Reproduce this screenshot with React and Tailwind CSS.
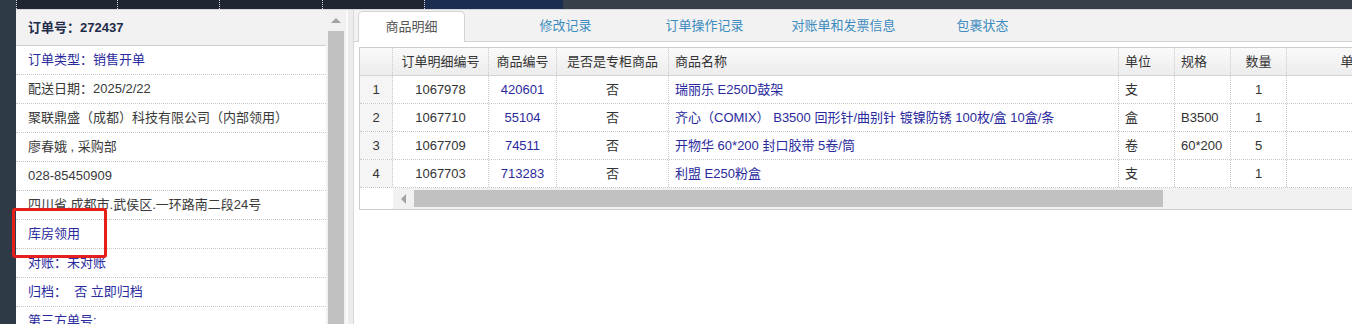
import React from "react";

const leftRows = [
  { t: "订单类型：销售开单", blue: true },
  { t: "配送日期：2025/2/22" },
  { t: "聚联鼎盛（成都）科技有限公司（内部领用）" },
  { t: "廖春娥 , 采购部" },
  { t: "028-85450909" },
  { t: "四川省.成都市.武侯区.一环路南二段24号" },
  { t: "库房领用", blue: true },
  { t: "对账：未对账", blue: true },
  { t: "归档：  否 立即归档", blue: true },
  { t: "第三方单号:", blue: true },
];

const rows = [
  ["1", "1067978", "420601", "否", "瑞丽乐 E250D鼓架", "支", "", "1"],
  ["2", "1067710", "55104", "否", "齐心（COMIX） B3500 回形针/曲别针 镀镍防锈 100枚/盒 10盒/条", "盒", "B3500", "1"],
  ["3", "1067709", "74511", "否", "开物华 60*200 封口胶带 5卷/筒", "卷", "60*200", "5"],
  ["4", "1067703", "713283", "否", "利盟 E250粉盒", "支", "", "1"],
];

const tabs = ["商品明细", "修改记录", "订单操作记录", "对账单和发票信息", "包裹状态"];

function Cell({ w, className = "", children }) {
  return (
    <div className={`${w} shrink-0 h-full flex items-center border-r border-dotted border-[#c8c8c8] ${className}`}>
      {children}
    </div>
  );
}

export default function App() {
  return (
    <div className="relative w-[1352px] h-[324px] overflow-hidden flex bg-white font-['Liberation_Sans','Noto_Sans_CJK_SC',sans-serif] text-[13px] text-[#333]">
      {/* far-left dark strip */}
      <div className="w-[16px] shrink-0 h-full bg-[#2e3a46]" />

      <div className="flex-1 flex flex-col min-w-0">
        {/* top bar */}
        <div className="h-[9px] shrink-0 flex bg-[#1f2531]">
          <div className="w-[101px] border-l border-dotted border-[#d8d8d8]" />
          <div className="w-[102px] border-l border-dotted border-[#d8d8d8]" />
          <div className="w-[103px] border-l border-dotted border-[#d8d8d8]" />
          <div className="w-[102px] border-l border-dotted border-[#d8d8d8]" />
          <div className="w-[139px] border-l border-dotted border-[#d8d8d8] bg-[#1b2d50]" />
          <div className="flex-1 bg-[#363f4a]" />
        </div>

        <div className="flex-1 flex min-h-0 border-t border-[#d6d6d6]">
          {/* left info panel */}
          <div className="w-[310px] shrink-0 flex flex-col">
            <div className="h-[36px] shrink-0 flex items-center pl-[12px] bg-[#f2f2f2] border-b border-[#cfcfcf] font-bold text-[#1f2b4a]">
              订单号：272437
            </div>
            {leftRows.map((r, i) => (
              <div
                key={i}
                className={`h-[29px] shrink-0 flex items-center pl-[12px] border-b border-dotted border-[#c8c8c8] whitespace-pre ${r.blue ? "text-[#2a2a9e]" : "text-[#3a3a3a]"}`}
              >
                {r.t}
              </div>
            ))}
          </div>

          {/* vertical scrollbar */}
          <div className="w-[20px] shrink-0 flex flex-col bg-[#f1f1f1]">
            <div className="h-[21px] shrink-0 flex items-center justify-center">
              <div className="w-0 h-0 border-l-[5px] border-r-[5px] border-b-[5px] border-l-transparent border-r-transparent border-b-[#a3a3a3]" />
            </div>
            <div className="flex-1 mx-[2px] bg-[#c1c1c1]" />
          </div>

          {/* gap */}
          <div className="w-[7px] shrink-0 bg-[#ececec] border-l-2 border-[#fafafa]" />

          {/* right panel */}
          <div className="flex-1 min-w-0 flex flex-col border-l border-[#d9d9d9]">
            <div className="h-[32px] shrink-0 flex items-end gap-[32px] bg-[#f2f2f2] border-b border-[#d3d3d3] pl-[4px]">
              {tabs.map((t, i) =>
                i === 0 ? (
                  <div
                    key={t}
                    className="w-[107px] shrink-0 h-[31px] -mb-px mr-[15px] flex items-center justify-center bg-white border border-b-0 border-[#d3d3d3] rounded-t-[5px] text-[#555]"
                  >
                    {t}
                  </div>
                ) : (
                  <div key={t} className="w-[107px] shrink-0 h-[31px] flex items-center justify-center whitespace-nowrap text-[#3d8cc0]">
                    {t}
                  </div>
                )
              )}
            </div>

            <div className="pt-[5px] pl-[5px]">
              <div className="w-[1100px] border border-[#cdcdcd]">
                {/* header */}
                <div className="h-[28px] flex border-b border-[#d5d5d5] bg-gradient-to-b from-[#fafafa] to-[#ececec]">
                  <Cell w="w-[33px]" />
                  <Cell w="w-[96px]" className="justify-center">订单明细编号</Cell>
                  <Cell w="w-[68px]" className="justify-center">商品编号</Cell>
                  <Cell w="w-[112px]" className="justify-center">是否是专柜商品</Cell>
                  <Cell w="w-[450px]" className="pl-[6px]">商品名称</Cell>
                  <Cell w="w-[56px]" className="pl-[6px]">单位</Cell>
                  <Cell w="w-[56px]" className="pl-[6px]">规格</Cell>
                  <Cell w="w-[56px]" className="justify-center">数量</Cell>
                  <Cell w="w-[134px]" className="justify-center">单价</Cell>
                </div>
                {rows.map((r) => (
                  <div key={r[0]} className="h-[28px] flex border-b border-dotted border-[#c8c8c8]">
                    <Cell w="w-[33px]" className="justify-center bg-[#f5f5f5]">{r[0]}</Cell>
                    <Cell w="w-[96px]" className="justify-center">{r[1]}</Cell>
                    <Cell w="w-[68px]" className="justify-center text-[#2a2a9e]">{r[2]}</Cell>
                    <Cell w="w-[112px]" className="justify-center">{r[3]}</Cell>
                    <Cell w="w-[450px]" className="pl-[6px] text-[#2a2a9e] whitespace-nowrap">{r[4]}</Cell>
                    <Cell w="w-[56px]" className="pl-[6px]">{r[5]}</Cell>
                    <Cell w="w-[56px]" className="pl-[6px]">{r[6]}</Cell>
                    <Cell w="w-[56px]" className="justify-center">{r[7]}</Cell>
                    <Cell w="w-[134px]" />
                  </div>
                ))}
                {/* horizontal scrollbar */}
                <div className="h-[21px] flex">
                  <div className="w-[33px] shrink-0 bg-white" />
                  <div className="flex-1 flex items-center bg-[#f1f1f1]">
                    <div className="w-[21px] shrink-0 flex items-center justify-center">
                      <div className="w-0 h-0 border-t-[5px] border-b-[5px] border-r-[5px] border-t-transparent border-b-transparent border-r-[#a3a3a3]" />
                    </div>
                    <div className="w-[749px] h-[17px] bg-[#c1c1c1]" />
                  </div>
                </div>
              </div>
            </div>
          </div>
        </div>
      </div>

      {/* red highlight box */}
      <div className="absolute left-[12px] top-[208px] w-[95px] h-[50px] border-[3px] border-[#e3201b] rounded-[3px]" />
    </div>
  );
}
